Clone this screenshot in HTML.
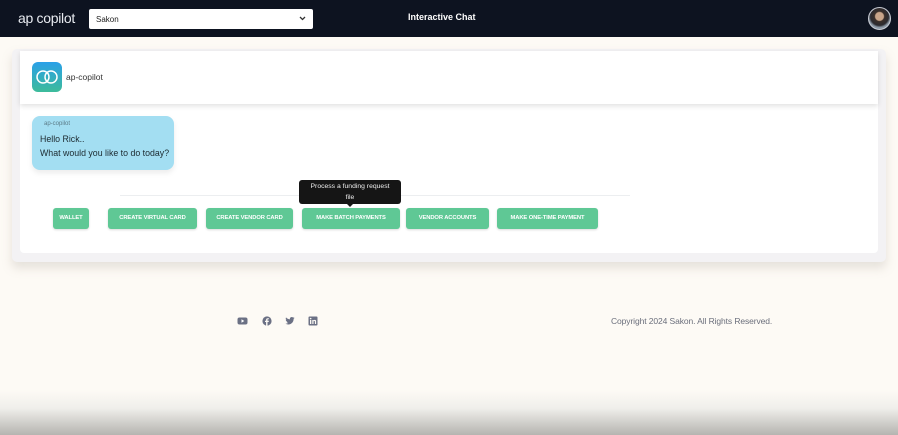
<!DOCTYPE html>
<html><head><meta charset="utf-8"><style>
*{margin:0;padding:0;box-sizing:border-box}
body{width:898px;height:435px;overflow:hidden;background:#fdfaf5;font-family:"Liberation Sans",sans-serif;position:relative}
.hdr{position:absolute;left:0;top:0;width:898px;height:37px;background:#0d1320}
.logo{position:absolute;left:18px;top:10px;color:#e8ebf0;font-size:14px;letter-spacing:-0.3px;font-weight:300}
.sel{position:absolute;left:89px;top:9px;width:224px;height:20px;background:#fff;border-radius:2px;font-size:8px;color:#222;padding:6px 0 0 7px}
.sel svg{position:absolute;right:7px;top:7px}
.title{position:absolute;left:408px;top:12px;color:#fff;font-size:9px;font-weight:bold}
.av{position:absolute;left:868px;top:7px;width:23px;height:23px;border-radius:50%;border:1.5px solid #c9ccd4;background:radial-gradient(circle at 50% 40%,#c9a58a 0 4px,#3a2f2a 5px,#2c2b30 9px,#8d9aa8 11px)}
.outer{position:absolute;left:12px;top:49px;width:874px;height:213px;background:#f3f2f4;border-radius:5px;box-shadow:0 6px 10px rgba(160,150,140,.25)}
.chat{position:absolute;left:20px;top:104px;width:858px;height:149px;background:#fff;border-radius:0 0 4px 4px}
.head{position:absolute;left:20px;top:51px;width:858px;height:53px;background:#fff;box-shadow:0 2px 5px rgba(0,0,0,.12)}
.appic{position:absolute;left:32px;top:62px;width:30px;height:30px;border-radius:6px;background:linear-gradient(#2aa0e8,#3dbb9a)}
.appn{position:absolute;left:66px;top:72px;font-size:8.5px;color:#333}
.bub{position:absolute;left:32px;top:116px;width:142px;height:54px;background:#a3def2;border-radius:8px;box-shadow:0 3px 6px rgba(0,0,0,.08)}
.bub .n{position:absolute;left:12px;top:5px;font-size:6px;color:#5b7a86}
.bub .t{position:absolute;left:8px;top:16px;font-size:8.8px;line-height:14px;color:#1c2a30}
.line{position:absolute;left:120px;top:195px;width:510px;height:1px;background:#eceef0}
.btn{position:absolute;top:208px;height:21px;background:#5fc895;color:#fff;font-size:5.8px;font-weight:bold;text-align:center;line-height:21px;border-radius:3px;box-shadow:0 1px 2px rgba(0,0,0,.15);letter-spacing:-0.1px}
.tip{position:absolute;left:299px;top:180px;width:102px;height:24px;background:#151515;color:#eee;border-radius:3px;font-size:6.8px;text-align:center;line-height:11px;padding-top:1px}
.tip:after{content:"";position:absolute;left:48px;bottom:-3px;border:3px solid transparent;border-bottom:0;border-top-color:#151515}
.ic{position:absolute;top:316px}
.copy{position:absolute;left:611px;top:316px;font-size:8.5px;color:#6b6f7c;letter-spacing:-0.1px}
.fade{position:absolute;left:0;top:390px;width:898px;height:45px;background:linear-gradient(#fdfaf5,#f0efeb 40%,#b5b4b0)}
</style></head><body>
<div class="hdr">
 <div class="logo">ap copilot</div>
 <div class="sel">Sakon<svg width="7" height="5" viewBox="0 0 7 5"><path d="M1 1l2.5 2.5L6 1" stroke="#333" stroke-width="1.3" fill="none"/></svg></div>
 <div class="title">Interactive Chat</div>
 <div class="av"></div>
</div>
<div class="outer"></div>
<div class="chat"></div>
<div class="head"></div>
<div class="appic"><svg width="30" height="30" viewBox="0 0 30 30"><circle cx="11" cy="15" r="6" stroke="#fff" stroke-width="1.5" fill="none"/><circle cx="19" cy="15" r="6" stroke="#fff" stroke-width="1.5" fill="none"/></svg></div>
<div class="appn">ap-copilot</div>
<div class="bub"><div class="n">ap-copilot</div><div class="t">Hello Rick..<br>What would you like to do today?</div></div>
<div class="line"></div>
<div class="btn" style="left:53px;width:36px">WALLET</div>
<div class="btn" style="left:108px;width:89px">CREATE VIRTUAL CARD</div>
<div class="btn" style="left:206px;width:87px">CREATE VENDOR CARD</div>
<div class="btn" style="left:302px;width:98px">MAKE BATCH PAYMENTS</div>
<div class="btn" style="left:406px;width:83px">VENDOR ACCOUNTS</div>
<div class="btn" style="left:497px;width:101px">MAKE ONE-TIME PAYMENT</div>
<div class="tip">Process a funding request<br>file</div>
<svg class="ic" style="left:237px" width="11" height="10" viewBox="0 0 11 10"><rect x="0.5" y="1.5" width="10" height="7" rx="2" fill="#6b7084"/><path d="M4.5 3.3v3.4L7.3 5z" fill="#fff"/></svg>
<svg class="ic" style="left:262px" width="10" height="10" viewBox="0 0 10 10"><circle cx="5" cy="5" r="4.6" fill="#6b7084"/><path d="M5.5 10V6h1.2l.2-1.3H5.5v-.8c0-.4.2-.6.6-.6h.8V2.2H5.8c-1.1 0-1.7.6-1.7 1.6v.9H3V6h1.1v4z" fill="#fdfaf5"/></svg>
<svg class="ic" style="left:285px" width="10" height="10" viewBox="0 0 24 24"><path d="M23 4.6a9 9 0 01-2.6.7 4.5 4.5 0 002-2.5 9 9 0 01-2.9 1.1 4.5 4.5 0 00-7.7 4.1A12.8 12.8 0 012.5 3.3a4.5 4.5 0 001.4 6 4.5 4.5 0 01-2-.6 4.5 4.5 0 003.6 4.5 4.5 4.5 0 01-2 .1 4.5 4.5 0 004.2 3.1A9 9 0 011 18.3a12.8 12.8 0 006.9 2c8.3 0 12.8-6.9 12.8-12.8v-.6A9 9 0 0023 4.6z" fill="#6b7084"/></svg>
<svg class="ic" style="left:308px" width="10" height="10" viewBox="0 0 10 10"><rect x="0.5" y="0.5" width="9" height="9" rx="1" fill="#6b7084"/><rect x="2" y="4" width="1.3" height="4" fill="#fdfaf5"/><circle cx="2.65" cy="2.6" r=".8" fill="#fdfaf5"/><path d="M4.3 4h1.2v.6c.3-.5.8-.7 1.3-.7 1 0 1.3.6 1.3 1.6V8H6.9V5.8c0-.5-.1-.9-.6-.9s-.8.4-.8.9V8H4.3z" fill="#fdfaf5"/></svg>
<div class="copy">Copyright 2024 Sakon. All Rights Reserved.</div>
<div class="fade"></div>
</body></html>
